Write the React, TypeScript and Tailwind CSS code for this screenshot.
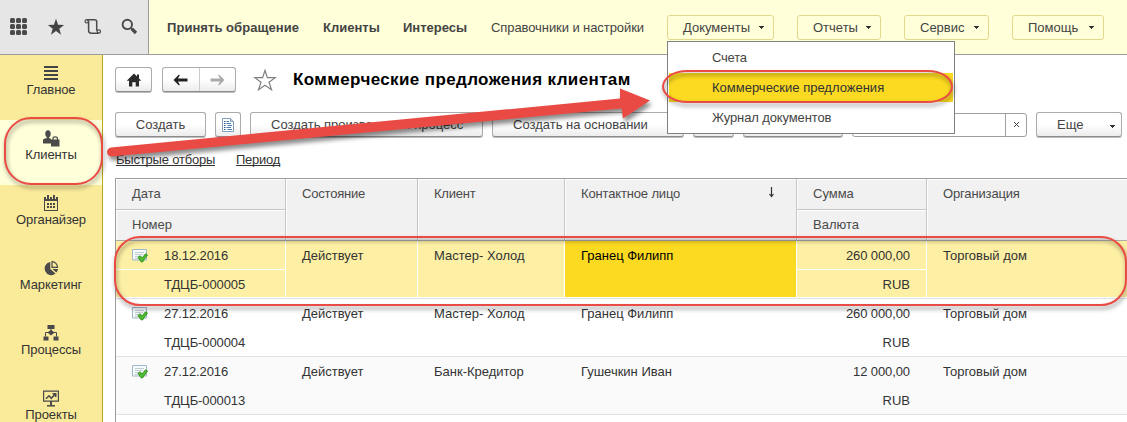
import React from 'react';

const Caret = ({ className = '' }: { className?: string }) => (
  <svg width="5" height="3" viewBox="0 0 5 3" shapeRendering="crispEdges" className={`shrink-0 ${className}`}>
    <path d="M0 0h5v1H4v1H3v1H2V2H1V1H0z" fill="#333" />
  </svg>
);

const GridIcon = () => (
  <svg width="18" height="18" viewBox="0 0 18 18" fill="#4a4a4a">
    {[0, 6, 12].map((y) =>
      [0, 6, 12].map((x) => <rect key={`${x}-${y}`} x={x} y={y} width="5" height="5" rx="1.5" />),
    )}
  </svg>
);

const StarIcon = () => (
  <svg width="18" height="18" viewBox="0 0 18 18">
    <path d="M9 .8l2.100 6 6 .2-4.800 3.700 1.800 6L9 13.100l-5.100 3.600 1.800-6L.9 7l6-.2z" fill="#444" />
  </svg>
);

const ScrollIcon = () => (
  <svg width="18" height="18" viewBox="0 0 18 18" fill="none" stroke="#4a4a4a" strokeWidth="1.500">
    <circle cx="2.700" cy="3.300" r="1.700" strokeWidth="1.200" />
    <path d="M2.700 1.700h8q2 0 2 2v9" />
    <path d="M4.600 3v9.500q0 2.700 2.700 2.700h7.500" />
    <circle cx="14.800" cy="13.500" r="1.700" strokeWidth="1.200" />
  </svg>
);

const SearchIcon = () => (
  <svg width="17" height="17" viewBox="0 0 17 17" fill="none" stroke="#4a4a4a">
    <circle cx="6.300" cy="6.400" r="4.700" strokeWidth="1.900" />
    <path d="M9.800 10l1.700 1.500" strokeWidth="2" />
    <path d="M11 11l4 4" strokeWidth="3.200" />
  </svg>
);

const MenuIcon = () => (
  <svg width="16" height="16" viewBox="0 0 16 16" fill="#444" shapeRendering="crispEdges">
    <path d="M1 1h14v2H1zM1 5h14v2H1zM1 9h14v2H1zM1 13h14v2H1z" />
  </svg>
);

const ClientsIcon = () => (
  <svg width="18" height="17" viewBox="0 0 18 17" fill="#4a4a4a">
    <ellipse cx="6" cy="3.700" rx="2.700" ry="3.500" />
    <path d="M4.800 6h2.400v3H4.800z" />
    <path d="M1 13.500V10.200q0-1.200 1.200-1.500L5 8h2l2 1v4.500z" />
    <path d="M9 9.500h8.500v7H9z" />
    <path d="M11 10V8.300q0-1.500 2.200-1.500t2.200 1.500V10" fill="none" stroke="#4a4a4a" strokeWidth="1.200" />
  </svg>
);

const CalendarIcon = () => (
  <svg width="16" height="16" viewBox="0 0 16 16" shapeRendering="crispEdges">
    <path d="M1 2h14v14H1z" fill="#4a4a4a" />
    <path d="M2 6h12v9H2z" fill="#faeb9b" />
    <path d="M3 2h1v2H3zM6 2h1v2H6zM9 2h1v2H9zM12 2h1v2h-1z" fill="#faeb9b" />
    <path d="M4 0h2v4H4zM10 0h2v4h-2z" fill="#4a4a4a" />
    <path d="M4 8h2v2H4zM7 8h2v2H7zM10 8h2v2h-2zM4 11h2v2H4zM7 11h2v2H7zM10 11h2v2h-2z" fill="#4a4a4a" />
  </svg>
);

const PieIcon = () => (
  <svg width="16" height="16" viewBox="0 0 16 16">
    <path d="M7.300 2v7l5.200 4.600A6.600 6.600 0 1 1 7.300 2z" fill="#4a4a4a" />
    <path d="M9 1.700v5.700h5.500A5.600 5.600 0 0 0 9 1.700z" fill="none" stroke="#4a4a4a" strokeWidth="1.200" />
    <path d="M9.500 9H15a7 7 0 0 1-1.700 3.600z" fill="#4a4a4a" />
  </svg>
);

const ProcessIcon = () => (
  <svg width="16" height="16" viewBox="0 0 16 16" fill="#4a4a4a">
    <path d="M4.500 0h7v4h-7zM0.500 11.500h5v4h-5zM10.500 11.500h5v4h-5z" />
    <path d="M8 4.800l3.600 2.700L8 10.400 4.400 7.500z" />
    <path d="M8 4v2M5 7.500H2.500v4M11 7.500h2.500v4" fill="none" stroke="#4a4a4a" strokeWidth="1" />
  </svg>
);

const ProjectIcon = () => (
  <svg width="18" height="17" viewBox="0 0 18 17" fill="none" stroke="#4a4a4a">
    <path d="M1.600 1.100h14.800v10H1.600z" strokeWidth="1.200" />
    <path d="M4 8.800l3-3 2.300 2.500 4-4.300M10.500 3.700h3.200v3.200" strokeWidth="1.600" />
    <path d="M9 11v4" strokeWidth="2" />
    <path d="M5 15.800h8" strokeWidth="1.500" />
  </svg>
);

const HomeIcon = () => (
  <svg width="16" height="14" viewBox="0 0 16 14">
    <path d="M8 .5L15.300 7.700H13V13.500H9.700V9.300H6.300v4.200H3V7.700H.7z" fill="#2b2b2b" />
    <path d="M11 1.500h2v4h-2z" fill="#2b2b2b" />
  </svg>
);

const ArrowIcon = ({ color, className = '' }: { color: string; className?: string }) => (
  <svg width="15" height="12" viewBox="0 0 15 12" className={className}>
    <path d="M.5 6L6 .5l.8.8L5 4.500h9.500v3H5l1.800 3.200-.8.8z" fill={color} />
  </svg>
);

const ListDocIcon = () => (
  <svg width="14" height="16" viewBox="0 0 14 16">
    <path d="M1.500 1.500h8l3 3v10h-11z" fill="#fff" stroke="#7f9fbd" />
    <path d="M9.500 1.500v3h3" fill="#c3d6e8" stroke="#7f9fbd" />
    <path d="M3 4.500h1.500M3 6.500h1.500M3 8.500h1.500M3 10.500h1.500M3 12.500h1.500" stroke="#2c5a86" />
    <path d="M5.500 4.500h2.500M5.500 6.500h4.500M6.500 8.500h4.500M5.500 10.500h4.500M6.500 12.500h4.500" stroke="#4b7eac" />
  </svg>
);

const PostedIcon = () => (
  <svg width="16" height="14" viewBox="0 0 16 14" className="mt-px shrink-0">
    <path d="M.5 .5h14v10.500H.5z" fill="#f7fafc" stroke="#9fb9ca" />
    <path d="M3 3.500h9M3 5.500h8M3 7.500h4M3 9.500h3" stroke="#c2ccd3" />
    <path d="M6 8.500l2-1.700 2.200 2 3.300-4L15.500 6l-5 7h-1.200z" fill="#4fbb2f" stroke="#2a8c1d" strokeWidth=".9" />
  </svg>
);

const sections = [
  { label: 'Главное', icon: <MenuIcon /> },
  { label: 'Клиенты', icon: <ClientsIcon />, active: true },
  { label: 'Органайзер', icon: <CalendarIcon /> },
  { label: 'Маркетинг', icon: <PieIcon /> },
  { label: 'Процессы', icon: <ProcessIcon /> },
  { label: 'Проекты', icon: <ProjectIcon /> },
];

const rows = [
  { date: '18.12.2016', no: 'ТДЦБ-000005', client: 'Мастер- Холод', person: 'Гранец Филипп', sum: '260 000,00', selected: true },
  { date: '27.12.2016', no: 'ТДЦБ-000004', client: 'Мастер- Холод', person: 'Гранец Филипп', sum: '260 000,00' },
  { date: '27.12.2016', no: 'ТДЦБ-000013', client: 'Банк-Кредитор', person: 'Гушечкин Иван', sum: '12 000,00', alt: true },
];

const columns = 'grid grid-cols-[170px_132px_147px_232px_130px_1fr]';

const Button = ({ className = 'justify-center', children }: { className?: string; children?: React.ReactNode }) => (
  <button
    className={`flex h-[25px] shrink-0 items-center rounded-[3px] border border-[#ababab] border-b-[#8c8c8c] bg-linear-to-b from-white from-50% to-[#ececec] leading-[23px] whitespace-nowrap text-[#444] shadow-[0_1px_0_#bcbcbc] ${className}`}
  >
    {children}
  </button>
);

const MenuButton = ({ label, className }: { label: string; className: string }) => (
  <button
    className={`flex h-[25px] shrink-0 items-center justify-between rounded-[3px] border border-[#e3d78b] pr-[9px] pl-[15px] leading-[23px] ${className}`}
  >
    {label}
    <Caret />
  </button>
);

const HeadCell = ({ children, second, last }: { children: React.ReactNode; second?: string; last?: boolean }) => (
  <div className={`flex flex-col ${last ? '' : 'border-r border-[#c6c6c6]'}`}>
    <div className={`flex justify-between border-t border-l border-white pr-[21px] pl-[15px] leading-[28px] ${second ? 'h-[30px]' : 'h-[61px]'}`}>
      {children}
    </div>
    {second && (
      <div className="border-t border-[#c6c6c6]">
        <div className="h-[30px] border-t border-l border-white pl-[15px] leading-[28px]">{second}</div>
      </div>
    )}
  </div>
);

type Row = (typeof rows)[number];

const TableRow = ({ row }: { row: Row }) => {
  const line = row.selected ? 'border-white' : 'border-transparent';
  const bg = row.selected ? 'bg-[#fdf0a5]' : row.alt ? 'bg-[#fafafa]' : 'bg-white';
  return (
    <div className="h-[58px] border-b border-[#e2e2e2]">
      <div className={`${columns} h-[57px] grid-rows-[56px] border-b leading-[29px] ${line} ${bg}`}>
        <div className={`border-r ${line}`}>
          <div className={`flex h-[29px] items-center gap-[16px] border-b pl-[16px] ${line}`}>
            <PostedIcon />
            <span className="tracking-[-0.1px]">{row.date}</span>
          </div>
          <div className="h-[27px] pl-[48px] tracking-[-0.1px]">{row.no}</div>
        </div>
        <div className={`border-r pl-[16px] ${line}`}>Действует</div>
        <div className={`border-r pl-[16px] ${line}`}>{row.client}</div>
        <div className={`border-r pl-[16px] ${line} ${row.selected ? 'bg-[#fbda21] text-black' : ''}`}>{row.person}</div>
        <div className={`border-r text-right ${line}`}>
          <div className={`h-[29px] border-b pr-[16px] tracking-[-0.1px] ${line}`}>{row.sum}</div>
          <div className="h-[27px] pr-[16px]">RUB</div>
        </div>
        <div className="pl-[16px]">Торговый дом</div>
      </div>
    </div>
  );
};

export default function App() {
  return (
    <div className="relative flex h-[422px] w-[1127px] flex-col overflow-hidden bg-white font-['Liberation_Sans',Arial,sans-serif] text-[13px] leading-[15px] text-[#333]">
      <header className="flex h-[55px] shrink-0 border-b border-[#9c9c9c] bg-[#ffffd9] text-[#444]">
        <div className="flex w-[149px] shrink-0 gap-[19px] border-r border-[#9c9c9c] bg-[#e6e6e6] pt-[18px] pl-[10px]">
          <GridIcon />
          <StarIcon />
          <ScrollIcon />
          <SearchIcon />
        </div>
        <nav className="flex pt-[15px] pl-[18px] leading-[25px] whitespace-nowrap">
          <b className="w-[156px] tracking-[0.05px]">Принять обращение</b>
          <b className="w-[80px]">Клиенты</b>
          <b className="w-[88px]">Интересы</b>
          <span className="w-[176px] tracking-[-0.08px]">Справочники и настройки</span>
          <div className="flex gap-[23px]">
            <MenuButton label="Документы" className="w-[107px]" />
            <MenuButton label="Отчеты" className="w-[84px]" />
            <MenuButton label="Сервис" className="w-[85px]" />
            <MenuButton label="Помощь" className="w-[92px]" />
          </div>
        </nav>
      </header>

      <div className="flex min-h-0 flex-1">
        <aside className="flex w-[103px] shrink-0 flex-col border-r border-[#bba61c] bg-[#faeb9b]">
          {sections.map((s) => (
            <div key={s.label} className={`flex h-[65px] shrink-0 flex-col items-center pt-[10px] ${s.active ? 'bg-[#ffffd9]' : ''}`}>
              <div className="flex h-[17px] items-start">{s.icon}</div>
              <span className="tracking-[-0.1px]">{s.label}</span>
            </div>
          ))}
        </aside>

        <main className="flex min-w-0 flex-1 flex-col pt-[12px] pl-[12px]">
          <div className="flex h-[25px] shrink-0 items-center">
            <Button className="w-[37px] justify-center">
              <HomeIcon />
            </Button>
            <Button className="ml-[10px] w-[74px]">
              <span className="flex h-full flex-1 items-center justify-center border-r border-[#ccc]">
                <ArrowIcon color="#222" />
              </span>
              <span className="flex h-full flex-1 items-center justify-center">
                <ArrowIcon color="#aaa" className="-scale-x-100" />
              </span>
            </Button>
            <svg width="24" height="24" viewBox="0 0 24 24" className="ml-[17px]">
              <path d="M12 2.500l2.400 7.200h7.800l-6.200 4.600 2.500 7.400L12 17.200l-6.500 4.500L8 14.300 1.800 9.700h7.800z" fill="#fff" stroke="#808080" strokeWidth="1.200" />
            </svg>
            <h1 className="ml-[16px] text-[17px] leading-[27px] font-bold tracking-[0.38px] whitespace-nowrap text-black">Коммерческие предложения клиентам</h1>
          </div>

          <div className="mt-[20px] flex h-[25px] shrink-0 gap-[9px]">
            <Button className="w-[91px] justify-center">Создать</Button>
            <Button className="w-[26px] justify-center">
              <ListDocIcon />
            </Button>
            <Button className="w-[233px] pl-[20px]">Создать произвольный процесс</Button>
            <Button className="w-[192px] pl-[20px]">Создать на основании</Button>
            <Button className="w-[41px]" />
            <Button className="w-[100px]" />
            <div className="flex h-[24px] w-[175px] justify-end self-center rounded-[3px] border border-[#a0a0a0] bg-white">
              <span className="flex w-[21px] items-center justify-center border-l border-[#a0a0a0]">
                <svg width="5" height="5" viewBox="0 0 5 5">
                  <path d="M0 0l5 5M5 0L0 5" stroke="#444" />
                </svg>
              </span>
            </div>
            <Button className="w-[86px] justify-between pr-[6px] pl-[20px]">
              Еще
              <Caret className="mt-[4px]" />
            </Button>
          </div>

          <div className="mt-[15px] flex h-[15px] shrink-0 gap-[21px] pl-px whitespace-nowrap">
            <a className="h-[14px] w-[99px] border-b border-[#333] tracking-[-0.2px]">Быстрые отборы</a>
            <a className="h-[14px] w-[44px] border-b border-[#333] tracking-[-0.25px]">Период</a>
          </div>

          <section className="mt-[11px] flex-1 border-t border-l border-[#9c9c9c]">
            <div className={`${columns} h-[62px] border-b border-[#aaa] bg-[#f1f1f1] text-[#4a4a4a]`}>
              <HeadCell second="Номер">Дата</HeadCell>
              <HeadCell>
                <span className="tracking-[-0.2px]">Состояние</span>
              </HeadCell>
              <HeadCell>
                <span className="tracking-[-0.2px]">Клиент</span>
              </HeadCell>
              <HeadCell>
                <span className="tracking-[-0.15px]">Контактное лицо</span>
                <svg width="7" height="11" viewBox="0 0 7 11" className="mt-[7px]">
                  <path d="M3.500 0v9M1.500 7l2 2.500 2-2.500" fill="none" stroke="#333" strokeWidth="1.200" />
                </svg>
              </HeadCell>
              <HeadCell second="Валюта">Сумма</HeadCell>
              <HeadCell last>
                <span className="tracking-[-0.15px]">Организация</span>
              </HeadCell>
            </div>
            {rows.map((row) => (
              <TableRow key={row.no} row={row} />
            ))}
          </section>
        </main>
      </div>

      <div className="absolute top-[41px] left-[667px] h-[93px] w-[288px] border border-[#808080] bg-white px-px pt-px leading-[29px] text-[#444]">
        <div className="h-[30px] pl-[43px] tracking-[-0.2px]">Счета</div>
        <div className="h-[29px] bg-[#fbda21] pl-[43px] text-[#333]">Коммерческие предложения</div>
        <div className="mt-px h-[29px] pl-[43px] tracking-[-0.12px]">Журнал документов</div>
      </div>

      <div className="absolute top-[117px] left-[4px] h-[68px] w-[99px] rounded-[27px] border-2 border-[#ea4b45] drop-shadow-[1px_3px_2px_rgba(0,0,0,0.45)]" />
      <div className="absolute top-[70px] left-[662px] h-[33px] w-[291px] rounded-[26px/17px] border-2 border-[#ea4b45] drop-shadow-[1px_3px_2px_rgba(0,0,0,0.45)]" />
      <div className="absolute top-[236px] left-[114px] h-[70px] w-[1013px] rounded-[26px] border-2 border-[#ea4b45] drop-shadow-[1px_3px_2px_rgba(0,0,0,0.45)]" />
      <svg width="560" height="90" viewBox="100 80 560 90" className="absolute top-[80px] left-[100px] drop-shadow-[2px_4px_2px_rgba(0,0,0,0.45)]">
        <path d="M111 147.500L620 98.500V88.500L650 100.500 623 118.500 621.500 108.500 112 156.500A4.500 4.500 0 0 1 111 147.500z" fill="#e94b44" />
      </svg>
    </div>
  );
}
